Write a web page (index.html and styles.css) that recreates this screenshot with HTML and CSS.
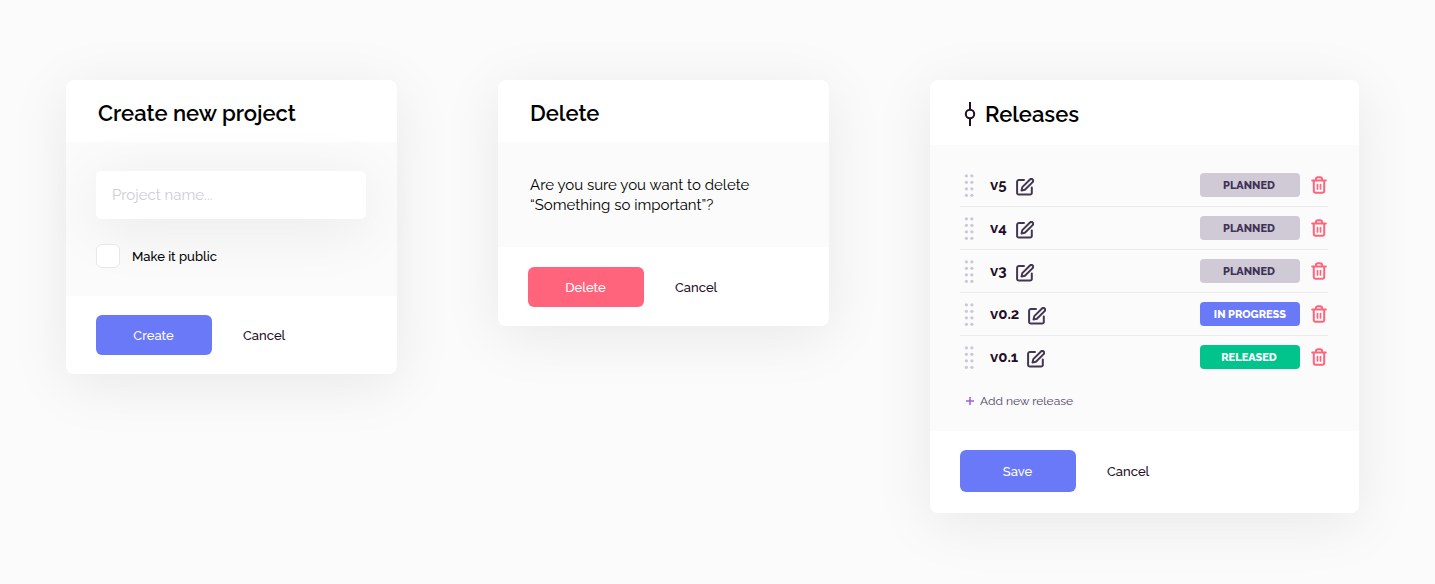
FILE: index.html
```html
<!DOCTYPE html>
<html lang="en">
<head>
<meta charset="utf-8">
<meta name="viewport" content="width=device-width, initial-scale=1">
<title>Dialogs</title>
<link rel="stylesheet" href="styles.css">
</head>
<body>
<svg class="sprite" aria-hidden="true">
  <symbol id="grip" viewBox="0 0 10 23">
    <g fill="currentColor">
      <circle cx="2.4" cy="1.8" r="1.6"/><circle cx="7.9" cy="1.8" r="1.6"/>
      <circle cx="2.4" cy="8.3" r="1.6"/><circle cx="7.9" cy="8.3" r="1.6"/>
      <circle cx="2.4" cy="14.8" r="1.6"/><circle cx="7.9" cy="14.8" r="1.6"/>
      <circle cx="2.4" cy="21.3" r="1.6"/><circle cx="7.9" cy="21.3" r="1.6"/>
    </g>
  </symbol>
  <symbol id="edit" viewBox="0 0 18 18">
    <g fill="none" stroke="currentColor" stroke-width="2" stroke-linecap="round" stroke-linejoin="round">
      <path d="M8 2.100H2.800A1.7 1.7 0 0 0 1.1 3.800V14.900A1.7 1.7 0 0 0 2.800 16.600H14.100A1.7 1.7 0 0 0 15.800 14.900V9.600"/>
      <path d="M14 1.500A1.750 1.750 0 0 1 16.600 4.100L8.900 11.700L5.500 12.600L6.300 9.100Z"/>
    </g>
  </symbol>
  <symbol id="trash" viewBox="0 0 16 18">
    <g fill="none" stroke="currentColor" stroke-linecap="round" stroke-linejoin="round">
      <path stroke-width="2" d="M1.200 4.500H14.800M4.900 4V3.200A2 2 0 0 1 6.900 1.200H9.100A2 2 0 0 1 11.100 3.200V4M2.800 4.600V15.200A1.6 1.6 0 0 0 4.400 16.800H11.600A1.6 1.6 0 0 0 13.200 15.200V4.600"/>
      <path stroke-width="1.700" d="M6.500 8.500V13M9.500 8.500V13"/>
    </g>
  </symbol>
</svg>
<main class="board">
  <form class="card">
    <h2 class="card-head">Create new project</h2>
    <div class="card-body">
      <input class="field" type="text" placeholder="Project name..." aria-label="Project name">
      <label class="check" for="public"><input class="check-box" type="checkbox" id="public">Make it public</label>
    </div>
    <div class="card-foot">
      <button class="btn" type="button">Create</button>
      <button class="link" type="button">Cancel</button>
    </div>
  </form>

  <section class="card">
    <h2 class="card-head">Delete</h2>
    <div class="card-body card-body-text">
      <p class="message">Are you sure you want to delete “Something so important”?</p>
    </div>
    <div class="card-foot card-foot-text">
      <button class="btn btn-danger" type="button">Delete</button>
      <button class="link" type="button">Cancel</button>
    </div>
  </section>

  <section class="card">
    <h2 class="card-head card-head-icon">
      <svg class="commit" viewBox="0 0 12 26" fill="none" stroke="currentColor" stroke-width="2" aria-hidden="true"><circle cx="6" cy="13" r="4.200"/><path d="M6 1V9M6 17V25"/></svg>
      Releases
    </h2>
    <div class="card-body card-body-list">
      <ul class="releases">
        <li class="release"><svg class="grip"><use href="#grip"/></svg><span class="version">v5</span><button class="icon-btn edit" type="button" aria-label="Edit v5"><svg class="icon"><use href="#edit"/></svg></button><span class="badge">PLANNED</span><button class="icon-btn trash" type="button" aria-label="Delete v5"><svg class="icon"><use href="#trash"/></svg></button></li>
        <li class="release"><svg class="grip"><use href="#grip"/></svg><span class="version">v4</span><button class="icon-btn edit" type="button" aria-label="Edit v4"><svg class="icon"><use href="#edit"/></svg></button><span class="badge">PLANNED</span><button class="icon-btn trash" type="button" aria-label="Delete v4"><svg class="icon"><use href="#trash"/></svg></button></li>
        <li class="release"><svg class="grip"><use href="#grip"/></svg><span class="version">v3</span><button class="icon-btn edit" type="button" aria-label="Edit v3"><svg class="icon"><use href="#edit"/></svg></button><span class="badge">PLANNED</span><button class="icon-btn trash" type="button" aria-label="Delete v3"><svg class="icon"><use href="#trash"/></svg></button></li>
        <li class="release"><svg class="grip"><use href="#grip"/></svg><span class="version">v0.2</span><button class="icon-btn edit" type="button" aria-label="Edit v0.2"><svg class="icon"><use href="#edit"/></svg></button><span class="badge badge-progress">IN PROGRESS</span><button class="icon-btn trash" type="button" aria-label="Delete v0.2"><svg class="icon"><use href="#trash"/></svg></button></li>
        <li class="release"><svg class="grip"><use href="#grip"/></svg><span class="version">v0.1</span><button class="icon-btn edit" type="button" aria-label="Edit v0.1"><svg class="icon"><use href="#edit"/></svg></button><span class="badge badge-released">RELEASED</span><button class="icon-btn trash" type="button" aria-label="Delete v0.1"><svg class="icon"><use href="#trash"/></svg></button></li>
      </ul>
      <button class="add" type="button"><svg class="plus" viewBox="0 0 8 8" fill="none" stroke="currentColor" stroke-width="1.500" aria-hidden="true"><path d="M4 0V8M0 4H8"/></svg>Add new release</button>
    </div>
    <div class="card-foot card-foot-list">
      <button class="btn btn-tall" type="button">Save</button>
      <button class="link" type="button">Cancel</button>
    </div>
  </section>
</main>
</body>
</html>
```

FILE: styles.css
```css
* {
  box-sizing: border-box;
}

body {
  margin: 0;
  background: #fbfbfb;
  color: #000;
  font-family: Raleway, Lato, sans-serif;
  font-size: 13px;
  font-weight: 500;
}

button,
input {
  font: inherit;
}

button {
  padding: 0;
  border: 0;
  background: none;
  color: inherit;
  cursor: pointer;
}

.sprite {
  position: absolute;
  width: 0;
  height: 0;
}

.board {
  display: grid;
  grid-template-columns: 331fr 331fr 429fr;
  align-items: start;
  gap: 101px;
  padding: 80px 76px 64px 66px;
}

.card {
  border-radius: 8px;
  background: #fff;
  box-shadow: 0 10px 60px rgba(0, 0, 0, 0.08);
}

.card-head {
  margin: 0;
  padding: 19px 32px 15px;
  font-size: 22px;
  line-height: 28px;
  font-weight: 600;
}

.card-head-icon {
  display: flex;
  align-items: center;
  gap: 9px;
  padding: 20px 34px 17px;
}

.commit {
  width: 12px;
  height: 26px;
  color: #220c26;
}

.card-body {
  display: flex;
  flex-direction: column;
  gap: 25px;
  padding: 29px 31px 28px 30px;
  background: #fbfbfb;
}

.card-body-text {
  padding: 33px 32px 32px;
}

.card-body-list {
  align-items: flex-start;
  gap: 12px;
  padding-top: 19px;
  padding-bottom: 20px;
}

.field {
  width: 100%;
  height: 48px;
  padding: 0 16px;
  border: 0;
  border-radius: 6px;
  background: #fff;
  box-shadow: 0 10px 60px rgba(0, 0, 0, 0.08);
  font-size: 15px;
  font-weight: 400;
}

.field::placeholder {
  color: #d0ccda;
  opacity: 1;
}

.check {
  display: flex;
  align-items: center;
  align-self: flex-start;
  gap: 12px;
}

.check-box {
  width: 24px;
  height: 24px;
  margin: 0;
  border: 1px solid #e8e8e8;
  border-radius: 6px;
  background: #fff;
  appearance: none;
}

.check-box:checked {
  background: #6979f8;
}

.message {
  margin: 0;
  font-size: 15px;
  line-height: 20px;
  font-weight: 400;
}

.card-foot {
  display: flex;
  align-items: center;
  gap: 31px;
  padding: 19px 30px;
}

.card-foot-text {
  padding-top: 20px;
}

.card-foot-list {
  padding-bottom: 21px;
}

.btn {
  width: 116px;
  height: 40px;
  padding-right: 1px;
  border-radius: 6px;
  background: #6979f8;
  color: #fff;
}

.btn-danger {
  background: #ff647c;
}

.btn-tall {
  height: 42px;
}

.link {
  color: #220c26;
}

.releases {
  align-self: stretch;
  margin: 0;
  padding: 0;
  list-style: none;
}

.release {
  display: flex;
  align-items: center;
  height: 43px;
  border-bottom: 1px solid #ebebeb;
}

.release:last-child {
  border-bottom-color: transparent;
}

.grip {
  width: 10px;
  height: 23px;
  margin: 0 16px 0 4px;
  color: #cbc7d6;
}

.version {
  color: #220c26;
  font-size: 15px;
  font-weight: 700;
}

.icon-btn {
  display: flex;
}

.icon {
  width: 18px;
  height: 18px;
}

.edit {
  margin: 3px auto 0 9px;
  color: #433655;
}

.trash {
  margin-left: 10px;
  color: #ff647c;
}

.badge {
  width: 100px;
  padding: 1px 2px 0 0;
  border-radius: 4px;
  background: #d0c9d6;
  color: #3f3356;
  font-size: 11px;
  line-height: 23px;
  font-weight: 800;
  text-align: center;
}

.badge-progress {
  padding-right: 0;
  background: #6979f8;
  color: #fff;
}

.badge-released {
  background: #00c48c;
  color: #fff;
}

.add {
  display: flex;
  align-items: center;
  gap: 6px;
  margin-left: 6px;
  color: #4f4466;
  font-size: 12px;
  line-height: 20px;
  font-weight: 400;
}

.plus {
  width: 8px;
  height: 8px;
  color: #a05fd8;
}
```
